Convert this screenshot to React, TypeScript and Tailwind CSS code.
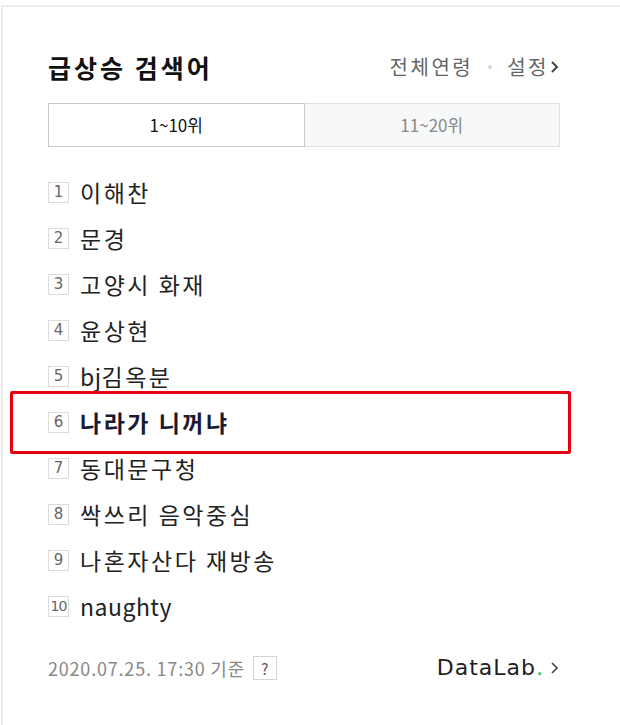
import React from "react";

const items = [
  "이해찬",
  "문경",
  "고양시 화재",
  "윤상현",
  "bj김옥분",
  "나라가 니꺼냐",
  "동대문구청",
  "싹쓰리 음악중심",
  "나혼자산다 재방송",
  "naughty",
];

const ko = { fontFamily: '"Noto Sans CJK KR", "Noto Sans", sans-serif' };

function Runs({ text }: { text: string }) {
  const parts = text.match(/[A-Za-z]+|[^A-Za-z]+/g) || [];
  return (
    <>
      {parts.map((p, i) =>
        /[A-Za-z]/.test(p) ? (
          <span key={i} className="tracking-[0.5px]">{p}</span>
        ) : (
          <span key={i} className="tracking-[2.5px]">{p}</span>
        )
      )}
    </>
  );
}

export default function App() {
  return (
    <div className="relative w-[620px] h-[725px] bg-white overflow-hidden" style={ko}>
      <div className="mt-[5px] ml-[1px] h-[720px] border-t-2 border-l-2 border-[#ececec] pl-[45px] pr-[60px]">
        {/* header */}
        <div className="flex items-center justify-between h-[40px] mt-[40px]">
          <h2 className="text-[25px] font-bold text-[#111] tracking-[3px] leading-none">급상승 검색어</h2>
          <div className="flex items-center text-[20px] text-[#666] tracking-[2.5px] leading-none">
            <span>전체연령</span>
            <span className="mx-[15px] w-[4px] h-[4px] rounded-full bg-[#d8d8d8]"></span>
            <span>설정</span>
            <svg width="10" height="14" viewBox="0 0 10 14" className="ml-[1px]">
              <path d="M2 2l5 5-5 5" fill="none" stroke="#444" strokeWidth="2" />
            </svg>
          </div>
        </div>
        {/* tabs */}
        <div className="flex mt-[16px] h-[44px]">
          <div className="flex-1 flex items-center justify-center border border-[#c9c9c9] bg-white text-[17px] text-[#111]">
            1~10위
          </div>
          <div className="flex-1 flex items-center justify-center border border-l-0 border-[#e2e2e2] bg-[#f7f8fa] text-[17px] text-[#888]">
            11~20위
          </div>
        </div>
        {/* list */}
        <ol className="mt-[22px]">
          {items.map((t, i) => (
            <li key={i} className="flex items-center h-[46px]">
              <span
                className={
                  "w-[21px] h-[21px] flex items-center justify-center border border-[#dcdcdc] text-[#666] leading-none " +
                  (i === 9 ? "text-[14px] tracking-[-1px]" : "text-[15px]")
                }
                style={{ fontFamily: '"DejaVu Sans", sans-serif' }}
              >
                {i + 1}
              </span>
              <span
                className={
                  "ml-[11px] text-[23px] leading-none " +
                  (i === 5 ? "font-bold text-[#1a1a33]" : "text-[#222]")
                }
              >
                <Runs text={t} />
              </span>
            </li>
          ))}
        </ol>
        {/* footer */}
        <div className="flex items-center justify-between mt-[26px] h-[26px]">
          <div className="flex items-center text-[18px] text-[#888] leading-none tracking-[0.8px]">
            <span>2020.07.25. 17:30 기준</span>
            <span className="ml-[8px] w-[24px] h-[24px] flex items-center justify-center border border-[#d5d5d5] text-[15px] text-[#555]">?</span>
          </div>
          <div className="flex items-center leading-none">
            <span className="text-[22px] text-[#1e1e1e] tracking-[1px]" style={{ fontFamily: '"DejaVu Sans", sans-serif' }}>
              DataLab<span className="text-[#03c75a]">.</span>
            </span>
            <svg width="10" height="14" viewBox="0 0 10 14" className="ml-[6px]">
              <path d="M2 2l5 5-5 5" fill="none" stroke="#444" strokeWidth="1.6" />
            </svg>
          </div>
        </div>
      </div>
      {/* annotation highlight */}
      <div className="absolute left-[10px] top-[391px] w-[561px] h-[63px] border-[3px] border-[#e60012] rounded-[2px] pointer-events-none"></div>
    </div>
  );
}
